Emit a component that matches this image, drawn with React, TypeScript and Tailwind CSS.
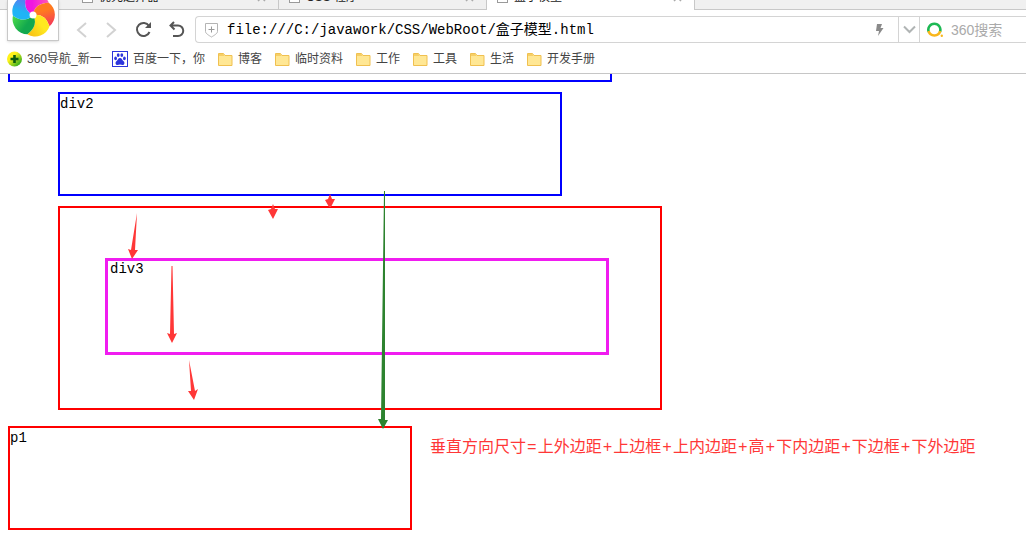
import type { ReactNode } from "react";

function PageIcon() {
  return (
    <svg width="11" height="13" viewBox="0 0 11 13" fill="#fff" stroke="#9a9a9a">
      <rect x="0.5" y="0.5" width="10" height="12" />
    </svg>
  );
}

function Tab({ title, active, width }: { title: string; active?: boolean; width: string }) {
  return (
    <div
      className={`flex shrink-0 items-end gap-1.5 border-r border-[#c8c8c8] pl-2.5 pr-3 ${width} ${
        active ? "bg-white pb-px" : "border-b bg-[#f0f0f0]"
      }`}
    >
      <div className="pb-1.5">
        <PageIcon />
      </div>
      <span className="flex-1 pb-1.5 text-xs leading-3 text-[#222]">{title}</span>
      <button aria-label="关闭标签" className="pb-[7px]">
        <svg width="9" height="9" viewBox="0 0 9 9" stroke="#aaa" strokeWidth="1.5">
          <path d="M1 1l7 7M8 1L1 8" />
        </svg>
      </button>
    </div>
  );
}

const petals = [
  ["#f016e0", "#ff5ab0"],
  ["#ff7a1f", "#f5365c"],
  ["#ffe81f", "#f7bd16"],
  ["#12a84e", "#4ddc4a"],
  ["#1fb4f5", "#6a6cf0"],
];

function BrowserLogo() {
  return (
    <svg width="44" height="44" viewBox="-22 -22 44 44">
      <defs>
        {petals.map(([from, to], i) => (
          <linearGradient key={from} id={`petal${i}`} x1="0" y1="0.3" x2="1" y2="0.3">
            <stop offset="0.3" stopColor={from} />
            <stop offset="1" stopColor={to} />
          </linearGradient>
        ))}
      </defs>
      {petals.map(([from], i) => (
        <path
          key={from}
          d="M0 0Q-10.900-5.100-6.800-18.800A15 15 0 0 1 15.800-12.300Q1.500-11.900 0 0Z"
          fill={`url(#petal${i})`}
          transform={`rotate(${i * 72})`}
        />
      ))}
      <circle r="3.5" fill="#fff" />
    </svg>
  );
}

function Folder() {
  return (
    <svg width="15" height="13" viewBox="0 0 15 13">
      <path d="M.5 12.5V.5h5l1.5 2h7v10z" fill="#ffe794" stroke="#f0c050" />
      <path d="M1 1h4.3l1.2 2H1z" fill="#f6cf66" />
    </svg>
  );
}

function NavIcon() {
  return (
    <svg className="shrink-0" width="15" height="16" viewBox="0 0 15 16">
      <defs>
        <linearGradient id="nav" x1="0" y1="0" x2="1" y2="1">
          <stop offset="0.35" stopColor="#fff21a" />
          <stop offset="0.8" stopColor="#45b51e" />
        </linearGradient>
      </defs>
      <circle cx="7.5" cy="8" r="7.5" fill="url(#nav)" />
      <path d="M7.5 4v8M3.5 8h8" stroke="#0b5a10" strokeWidth="2.6" />
    </svg>
  );
}

function PawIcon() {
  return (
    <svg width="16" height="16" viewBox="0 0 16 16">
      <rect x="0.5" y="0.5" width="15" height="15" fill="#fff" stroke="#2c35dc" />
      <g fill="#2c35dc">
        <ellipse cx="3.6" cy="7.4" rx="1.4" ry="1.8" />
        <ellipse cx="6.2" cy="4.1" rx="1.4" ry="1.9" />
        <ellipse cx="9.8" cy="4.1" rx="1.4" ry="1.9" />
        <ellipse cx="12.4" cy="7.4" rx="1.4" ry="1.8" />
        <path d="M8 7c-2 0-2 2-3.6 3.2C2.800 11.600 3.700 14 5.500 14c1 0 1.500-.4 2.500-.4s1.500.4 2.500.4c1.800 0 2.700-2.400 1.100-3.800C10 9 10 7 8 7z" />
      </g>
    </svg>
  );
}

function Bookmark({ icon, width, children }: { icon: ReactNode; width?: string; children: ReactNode }) {
  return (
    <a href="#" className={`flex shrink-0 items-center gap-[5px] whitespace-nowrap ${width ?? ""}`}>
      {icon}
      <span>{children}</span>
    </a>
  );
}

const folders = ["博客", "临时资料", "工作", "工具", "生活", "开发手册"];

const parts = ["上外边距", "上边框", "上内边距", "高", "下内边距", "下边框", "下外边距"];

function Arrows() {
  return (
    <svg className="pointer-events-none absolute left-0 top-0" width="700" height="400" viewBox="0 74 700 400">
      <g fill="#ff3737">
        <path d="M137 213L135 250H138L132 259L128 249L131 250Z" />
        <path d="M171.500 266H172.500L174 334L177 333L172 343L167 333L170 334Z" />
        <path d="M189 360L195 391L198 389L194 400L188 391L191 391Z" />
        <path d="M273 204L275 209L278 209L273 219L268 210L271 209Z" />
        <path d="M330 194L332 199L335 199L331 207H329L325 200L328 199Z" />
      </g>
      <path d="M384 191H385L385 420L388 420L383 429L378 419L381 419Z" fill="#2d832f" />
    </svg>
  );
}

export default function App() {
  return (
    <div className="overflow-hidden bg-white font-['Liberation_Sans','Noto_Sans_CJK_SC',sans-serif] text-black">
      <header className="relative border-b border-[#c6c6c6]">
        <div className="flex h-2.5 items-stretch overflow-hidden bg-[#f0f0f0]">
          <div className="w-[72px] shrink-0 border-b border-[#c8c8c8]" />
          <Tab title="优先选择器" width="w-[207px]" />
          <Tab title="CSS 程序" width="w-[208px]" />
          <Tab title="盒子模型" width="w-[208px]" active />
          <button
            aria-label="新建标签"
            className="flex flex-1 items-end border-b border-[#c8c8c8] pb-1.5 pl-3 text-xs leading-3 text-[#666]"
          >
            +
          </button>
        </div>
        <div className="absolute left-[7px] top-0 flex h-[41px] w-[52px] items-end justify-center overflow-hidden border border-t-0 border-[#c8c8c8] bg-white pb-[3px] shadow">
          <BrowserLogo />
        </div>
        <div className="flex items-center pt-1.5">
          <div className="flex shrink-0 items-center gap-4 pl-[75px] pr-2 text-[#555]">
            <button aria-label="后退">
              <svg width="14" height="18" viewBox="0 0 14 18" fill="none" stroke="#d2d2d2" strokeWidth="2">
                <path d="M11 2L3 9l8 7" />
              </svg>
            </button>
            <button aria-label="前进">
              <svg width="14" height="18" viewBox="0 0 14 18" fill="none" stroke="#d2d2d2" strokeWidth="2">
                <path d="M2 2l8 7-8 7" />
              </svg>
            </button>
            <button aria-label="刷新">
              <svg width="18" height="18" viewBox="0 0 18 18" fill="none" stroke="currentColor" strokeWidth="2">
                <path d="M14 5A6.500 6.500 0 1 0 14.500 11" />
                <path d="M16 1v6h-6z" fill="currentColor" stroke="none" />
              </svg>
            </button>
            <button aria-label="恢复">
              <svg width="18" height="18" viewBox="0 0 18 18" fill="none" stroke="currentColor" strokeWidth="2">
                <path d="M5 1L1.500 4.500l4 4M2 4.500h7a5 5 0 0 1 0 10.500H4" />
              </svg>
            </button>
          </div>
          <div className="flex h-[27px] min-w-0 flex-1 items-center rounded-l-sm border border-r-0 border-[#d4d4d4]">
            <svg className="ml-2 shrink-0" width="15" height="16" viewBox="0 0 15 16" fill="none" stroke="#b4b4b4">
              <path d="M1.500 1.500h12v8c0 2-3.500 4-6 5.500-2.500-1.500-6-3.500-6-5.500z" />
              <path d="M7.500 4.500v6M4.500 7.500h6" stroke="#999" />
            </svg>
            <input
              aria-label="地址"
              defaultValue="file:///C:/javawork/CSS/WebRoot/盒子模型.html"
              className="ml-2 min-w-0 flex-1 bg-transparent font-['Liberation_Mono','Noto_Sans_CJK_SC',monospace] text-sm leading-6 outline-none"
            />
            <button aria-label="极速模式" className="px-3.5">
              <svg width="9" height="14" viewBox="0 0 9 14" fill="#8a8a8a">
                <path d="M2 1h5L5.500 5H8.500L3 13 4 8H1z" />
              </svg>
            </button>
            <button
              aria-label="历史地址"
              className="flex h-full w-[21px] items-center justify-center border-l border-[#d4d4d4]"
            >
              <svg width="13" height="9" viewBox="0 0 13 9" fill="none" stroke="#b0b4b4" strokeWidth="2">
                <path d="M1 1.500l5.500 5.500L12 1.500" />
              </svg>
            </button>
            <label className="flex h-full w-[107px] items-center gap-2 border-l border-[#d4d4d4] pl-[7px]">
              <svg className="shrink-0" width="16" height="16" viewBox="0 0 16 16" fill="none" strokeWidth="2.6">
                <path d="M1.800 10A6 6 0 1 1 12.900 10" stroke="#1db954" />
                <path d="M1.600 9A6 6 0 0 0 13.200 9" stroke="#f9b61a" />
                <circle cx="14.800" cy="13.800" r="1.200" fill="#f9b61a" />
              </svg>
              <input
                aria-label="搜索"
                placeholder="360搜索"
                className="w-full min-w-0 text-sm outline-none placeholder:text-[#aaa]"
              />
            </label>
          </div>
        </div>
        <nav className="flex h-[30px] items-center gap-[13px] pl-[7px] pt-0.5 text-xs text-[#444]">
          <Bookmark icon={<NavIcon />} width="w-[92px]">
            360导航_新一
          </Bookmark>
          <Bookmark icon={<PawIcon />}>百度一下，你</Bookmark>
          {folders.map((name) => (
            <Bookmark key={name} icon={<Folder />}>
              {name}
            </Bookmark>
          ))}
        </nav>
      </header>
      <main className="relative px-2 pb-3.5 font-['Liberation_Mono','Noto_Sans_CJK_SC',monospace] text-sm leading-5">
        <div className="h-2 max-w-[604px] border-2 border-t-0 border-[#0000ff]" />
        <div className="ml-[50px] mt-2.5 h-[104px] max-w-[504px] border-2 border-[#0000ff]">div2</div>
        <div className="ml-[50px] mt-2.5 h-[204px] max-w-[604px] border-2 border-[#ff0000] pl-[45px] pt-[50px]">
          <div className="h-[97px] max-w-[504px] border-[3px] border-[#f01cf0] pl-0.5 leading-4">div3</div>
        </div>
        <div className="mt-4 flex items-start gap-[18px]">
          <p className="h-[104px] w-[404px] shrink-0 border-2 border-[#ff0000]">p1</p>
          <p className="whitespace-nowrap pt-2.5 text-base text-[#ff3737]">
            垂直方向尺寸
            {parts.map((part, i) => (
              <span key={part}>
                <span className="px-px">{i === 0 ? "=" : "+"}</span>
                {part}
              </span>
            ))}
          </p>
        </div>
        <Arrows />
      </main>
    </div>
  );
}
